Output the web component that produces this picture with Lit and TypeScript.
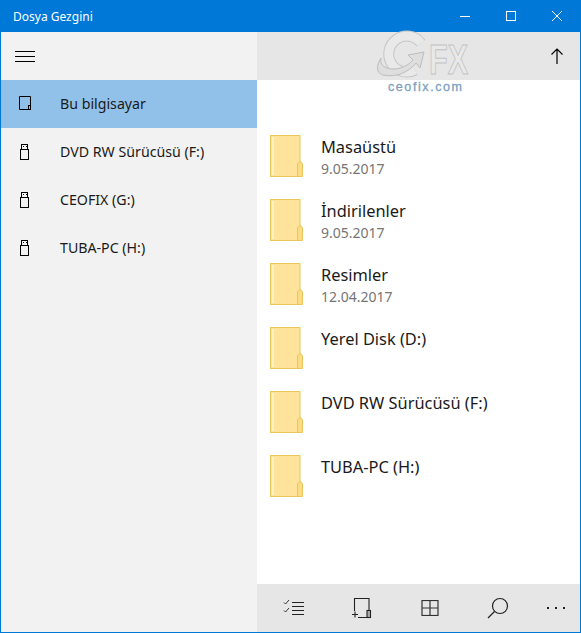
import { LitElement, html, css, svg } from "lit";
import { customElement } from "lit/decorators.js";

const usb = html`<svg class="ic" width="24" height="24" viewBox="0 0 24 24" fill="none" stroke="#000" stroke-width="1">
  <rect x="4.5" y="9.500" width="8" height="10"/><rect x="5.500" y="4.500" width="6" height="5"/>
  <path d="M7 6.500h1M10 6.500h1"/></svg>`;
const tablet = html`<svg class="ic" width="24" height="24" viewBox="0 0 24 24" fill="none" stroke="#000" stroke-width="1">
  <path d="M12 17.500H3.500V4.500H14.500V13"/><rect x="12.500" y="13.500" width="2" height="4"/></svg>`;
const folder = html`<svg class="folder" width="33" height="42" viewBox="0 0 33 42">
  <rect x="0.5" y="0.5" width="29.5" height="41" fill="#fde49a" stroke="#eac55c"/>
  <rect x="2" y="2" width="2" height="38" fill="#fff0c0"/>
  <path d="M27.500 41.500V29l3-3 2 3v12.500z" fill="#fbdc84" stroke="#eac55c"/></svg>`;

const gArc = "M46 11A18 18 0 1 0 40 38";
const logo = svg`<svg class="logo" width="100" height="66" viewBox="0 0 100 66">
  <path d="${gArc}" fill="none" stroke="#c6c6c6" stroke-width="11"/>
  <path d="${gArc}" fill="none" stroke="#e9e9e9" stroke-width="9"/>
  <path d="M6 26C1 34 1 41 8 43c13 3 26-3 33-12l4 5 4-16-16 3 5 5c-6 7-17 11-26 8-5-2-7-5-6-10z" fill="#dedede" stroke="#bdbdbd"/>
  <text x="54" y="42" font-family="Liberation Sans" font-weight="700" font-size="43" fill="#e9e9e9" stroke="#c2c2c2" stroke-width="1" textLength="39" lengthAdjust="spacingAndGlyphs">FX</text>
  <text x="13" y="59" font-family="Liberation Sans" font-size="12.500" fill="#7d9fbd" stroke="#7d9fbd" stroke-width=".3" textLength="74">ceofix.com</text>
</svg>`;

const rows = [
  ["Masaüstü", "9.05.2017"],
  ["İndirilenler", "9.05.2017"],
  ["Resimler", "12.04.2017"],
  ["Yerel Disk (D:)", ""],
  ["DVD RW Sürücüsü (F:)", ""],
  ["TUBA-PC (H:)", ""],
];

@customElement("app-root")
export class AppRoot extends LitElement {
  static styles = css`
    :host { display: block; width: 581px; height: 633px; box-sizing: border-box; border: 1px solid #0078d7; border-top: 0;
      font-family: "Noto Sans", "Open Sans", sans-serif; overflow: hidden; }
    .shell { display: flex; flex-direction: column; height: 100%; background: #fff; }
    .title { height: 32px; flex: none; background: #0078d7; color: #fff; display: flex; align-items: center; font-size: 12px; padding-left: 12px; }
    .title span { flex: 1; }
    .wc { width: 46px; height: 32px; display: flex; align-items: center; justify-content: center; }
    .wc svg { display: block; }
    .body { flex: 1; display: flex; min-height: 0; }
    .side { width: 256px; flex: none; background: #f2f2f2; display: flex; flex-direction: column; }
    .ham { height: 48px; display: flex; align-items: center; padding-left: 14px; }
    .nav { height: 48px; display: flex; align-items: center; font-size: 14.2px; color: #1a1a1a; padding-left: 15px; }
    .nav span { margin-top: -2px; }
    .nav .ic { margin-right: 20px; flex: none; display: block; }
    .nav.sel { background: #91c1e8; }
    .main { flex: 1; display: flex; flex-direction: column; min-width: 0; }
    .head { height: 48px; flex: none; background: #e6e6e6; display: flex; align-items: center; justify-content: flex-end; padding-right: 17px; position: relative; }
    .logo { position: absolute; left: 118px; top: 0; overflow: visible; }
    .list { flex: 1; padding-top: 44px; }
    .row { height: 64px; display: flex; padding-left: 13px; box-sizing: border-box; }
    .folder { flex: none; margin-right: 18px; margin-top: 11px; }
    .name { font-size: 16.4px; line-height: 22px; color: #1a1a1a; margin-top: 12px; }
    .date { font-size: 14px; line-height: 22px; color: #767676; }
    .bar { height: 48px; flex: none; background: #e6e6e6; display: flex; justify-content: flex-end; }
    .btn { width: 68px; display: flex; align-items: center; justify-content: center; }
    .btn.last { width: 48px; }
    .more { display: flex; gap: 6px; }
    .more i { width: 2px; height: 2px; background: #222; display: block; }
  `;

  render() {
    return html`<div class="shell">
      <div class="title"><span>Dosya Gezgini</span>
        <div class="wc"><svg width="10" height="10"><path d="M0 5.500h10" stroke="#fff"/></svg></div>
        <div class="wc"><svg width="10" height="10"><rect x=".5" y=".5" width="9" height="9" fill="none" stroke="#fff"/></svg></div>
        <div class="wc"><svg width="10" height="10"><path d="M0 0l10 10M10 0L0 10" stroke="#fff" fill="none"/></svg></div>
      </div>
      <div class="body">
        <div class="side">
          <div class="ham"><svg width="20" height="12"><path d="M0 1.500h20M0 6.500h20M0 11.500h20" stroke="#000" stroke-width="1"/></svg></div>
          <div class="nav sel">${tablet}<span>Bu bilgisayar</span></div>
          <div class="nav">${usb}<span>DVD RW Sürücüsü (F:)</span></div>
          <div class="nav">${usb}<span>CEOFIX (G:)</span></div>
          <div class="nav">${usb}<span>TUBA-PC (H:)</span></div>
        </div>
        <div class="main">
          <div class="head">${logo}
            <svg width="12" height="16" viewBox="0 0 12 16"><path d="M6 16V1M.5 6.500L6 1l5.500 5.500" fill="none" stroke="#000" stroke-width="1.200"/></svg>
          </div>
          <div class="list">
            ${rows.map(([n, d]) => html`<div class="row">${folder}<div><div class="name">${n}</div><div class="date">${d}</div></div></div>`)}
          </div>
          <div class="bar">
            <div class="btn"><svg width="22" height="16" viewBox="0 0 22 16" fill="none" stroke="#222"><path d="M1 2.500l1.500 1.500L6 0M1 10.500L2.500 12 6 8" stroke-width=".9"/><path d="M9 2.500h12M9 6.500h12M9 10.500h12M9 14.500h12" stroke-width="1.100"/></svg></div>
            <div class="btn"><svg width="22" height="22" viewBox="0 0 22 22" fill="none" stroke="#222" stroke-width="1.100"><path d="M3.500 14V1.500H18V13M7 20.500h9"/><rect x="16" y="13.500" width="3.500" height="7" fill="#aaa"/><path d="M1 17.500h6M4 14.500v6"/></svg></div>
            <div class="btn"><svg width="18" height="16" viewBox="0 0 18 16" fill="none" stroke="#333" stroke-width="1.200"><rect x="1" y=".5" width="16" height="15"/><path d="M9 .5v15M1 8h16"/></svg></div>
            <div class="btn"><svg width="22" height="22" viewBox="0 0 22 22" fill="none" stroke="#222" stroke-width="1.200"><circle cx="13" cy="9" r="7.500"/><path d="M7.500 14.500L1 21"/></svg></div>
            <div class="btn last"><div class="more"><i></i><i></i><i></i></div></div>
          </div>
        </div>
      </div>
    </div>`;
  }
}
